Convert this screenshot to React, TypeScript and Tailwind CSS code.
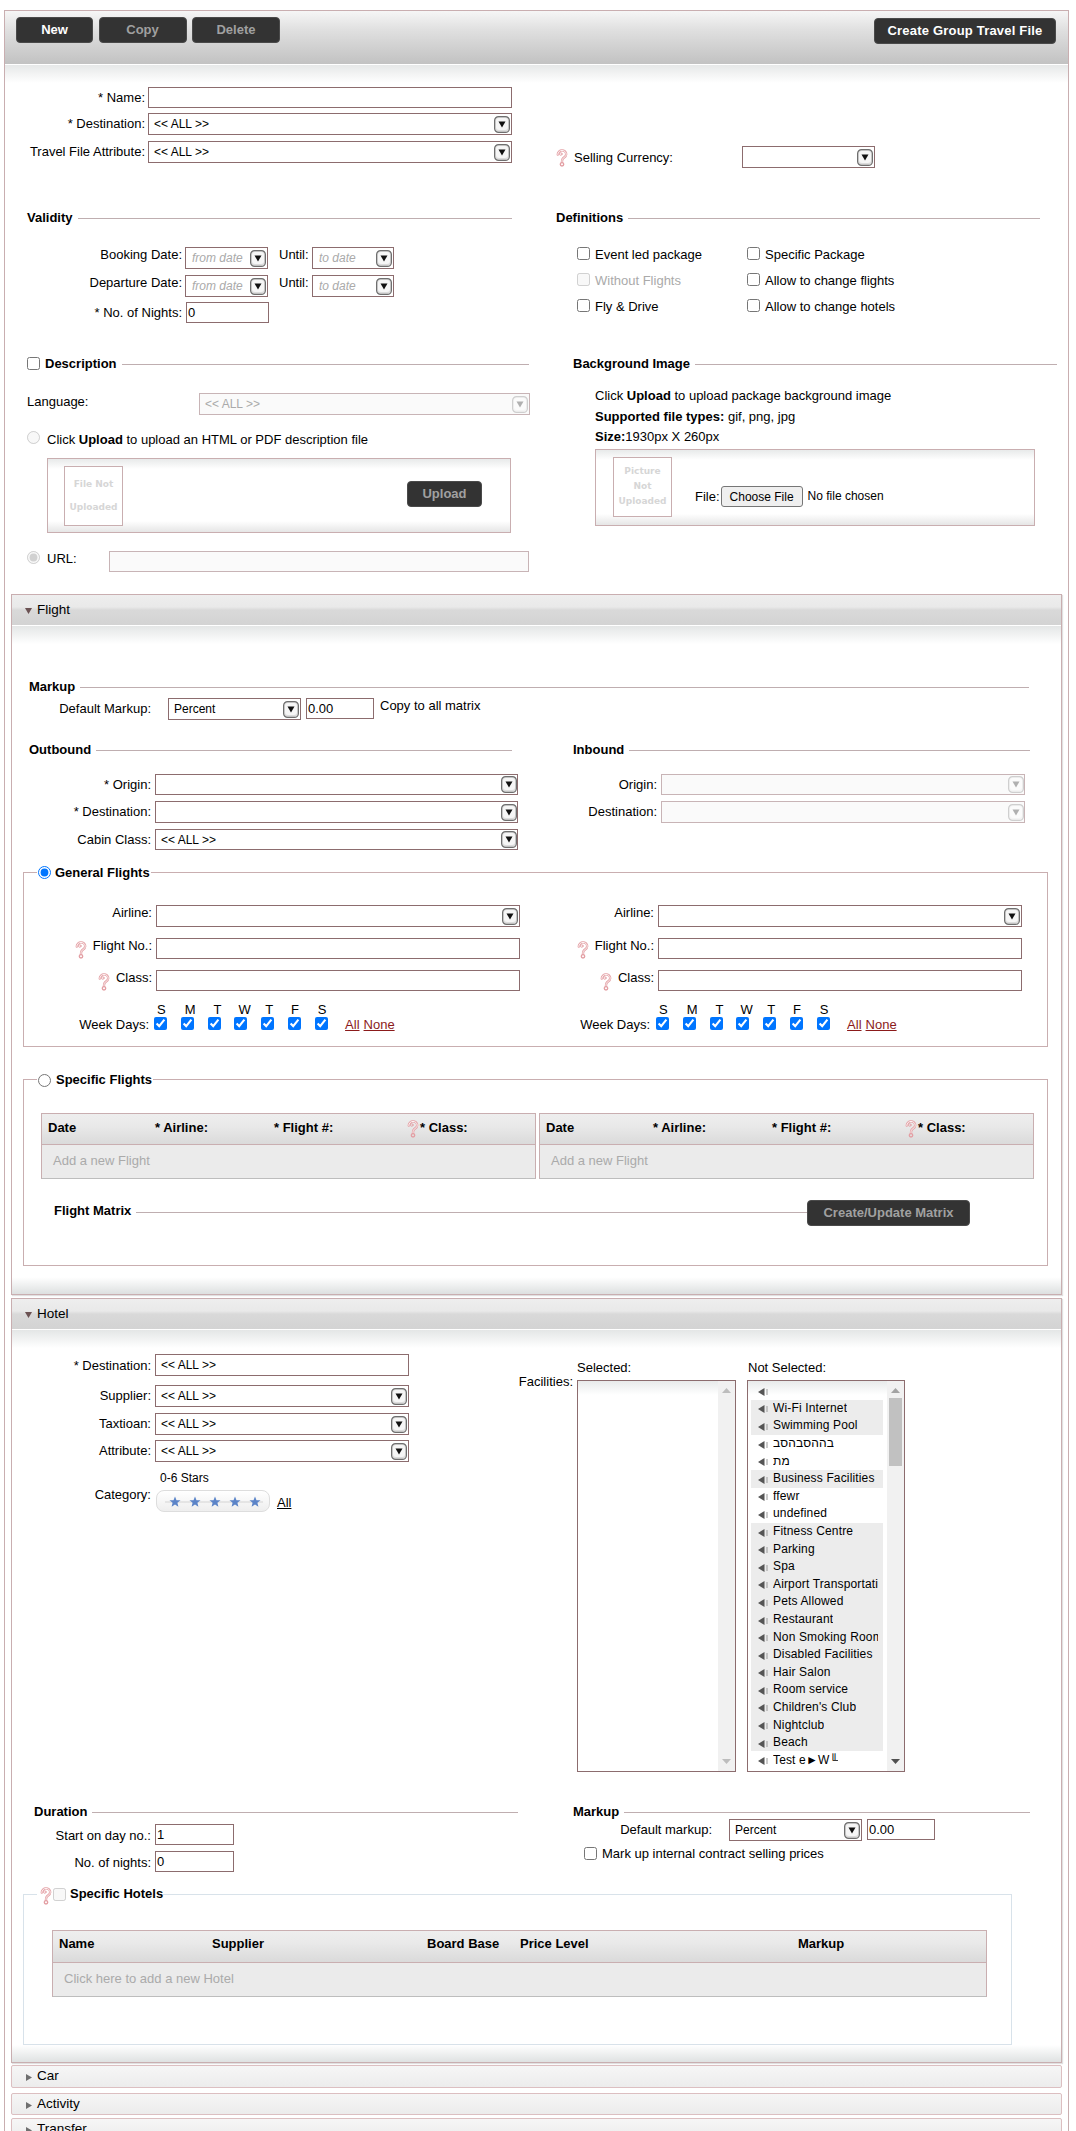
import React from "react";

type P = { className?: string; children?: React.ReactNode };

const Arrow = ({ off }: { off?: boolean }) => (
  <svg width="16" height="17" viewBox="0 0 16 17" className="shrink-0">
    <rect x="0.6" y="0.6" width="14.8" height="15.8" rx="4" fill={off ? "#f4f4f4" : "#dcdcdc"} stroke={off ? "#cfcfcf" : "#6f6f6f"} strokeWidth="1.2" />
    <rect x="2" y="2" width="12" height="12" rx="3" fill={off ? "#fbfbfb" : "#f6f6f6"} />
    <polygon points="4.5,5.5 11.5,5.5 8,11.5" fill={off ? "#b0b0b0" : "#111111"} />
  </svg>
);

const Sel = ({ className = "", text = "", off, noArrow, tight }: { className?: string; text?: string; off?: boolean; noArrow?: boolean; tight?: boolean }) => (
  <div className={`flex shrink-0 items-center justify-between border pl-[5px] text-[12px] ${tight ? "" : "pr-[1px]"} ${off ? "border-[#c8b4b6] bg-[#fafafa] text-[#aaaaaa]" : "border-[#8c6c6e] bg-white"} ${className}`}>
    <span>{text}</span>
    {!noArrow && <Arrow off={off} />}
  </div>
);

const DateSel = ({ className = "", text }: { className?: string; text: string }) => (
  <div className={`flex h-[22px] shrink-0 items-center justify-between border border-[#8c6c6e] pl-[6px] pr-[1px] text-[12px] italic text-[#aaaaaa] ${className}`}>
    <span>{text}</span>
    <Arrow />
  </div>
);

const Inp = ({ className = "", value = "", off }: { className?: string; value?: string; off?: boolean }) => (
  <input readOnly disabled={off} defaultValue={value} className={`block shrink-0 border pl-[1px] ${off ? "border-[#c8b4b6] bg-[#fafafa]" : "border-[#8c6c6e] bg-white"} ${className}`} />
);

const Lab = ({ className = "", children }: P) => <div className={`shrink-0 text-right leading-[15px] ${className}`}>{children}</div>;

const Title = ({ className = "", children }: P) => (
  <div className={`flex items-start font-bold leading-[15px] ${className}`}>
    {children}
    <div className="ml-[5px] mt-[8px] h-px flex-1 bg-[#bfaeb0]" />
  </div>
);

const Help = ({ className = "" }: { className?: string }) => (
  <svg width="12" height="18" viewBox="0 0 12 18" className={`shrink-0 ${className}`}>
    <g fill="none" strokeLinecap="round">
      <path d="M1.800 5.500C1.800 3 3.800 1.400 6 1.400s4.200 1.600 4.200 3.900c0 2-1.700 2.900-3 3.900C6.400 9.900 6 10.800 6 12.500" stroke="#e39fa4" strokeWidth="2.400" />
      <path d="M1.800 5.500C1.800 3 3.800 1.400 6 1.400s4.200 1.600 4.200 3.900c0 2-1.700 2.900-3 3.900C6.400 9.900 6 10.800 6 12.500" stroke="#fdf3f3" strokeWidth="1" />
      <circle cx="6" cy="15.300" r="1.700" stroke="#e39fa4" strokeWidth="1.400" />
      <circle cx="4.800" cy="5" r="1.300" stroke="#e39fa4" strokeWidth="0.900" />
    </g>
  </svg>
);

const Check = ({ on, off, className = "" }: { on?: boolean; off?: boolean; className?: string }) => (
  <input type="checkbox" readOnly checked={!!on} disabled={off} className={`m-0 block h-[13px] w-[13px] shrink-0 ${className}`} />
);
const Radio = ({ on, off, className = "" }: { on?: boolean; off?: boolean; className?: string }) => (
  <input type="radio" readOnly checked={!!on} disabled={off} className={`m-0 block h-[13px] w-[13px] shrink-0 ${className}`} />
);

const Btn = ({ className = "", children, dim }: P & { dim?: boolean }) => (
  <div className={`flex h-[26px] shrink-0 items-center justify-center rounded-[4px] border border-[#4a4a4a] bg-[#333333] text-[13px] font-bold ${dim ? "text-[#a0a0a0]" : "text-white"} ${className}`}>{children}</div>
);

const CbLabel = ({ children, off }: { children: React.ReactNode; off?: boolean }) => (
  <div className={`flex h-[26px] items-start gap-[5px] leading-[15px] ${off ? "text-[#aaaaaa]" : ""}`}>
    <Check off={off} />
    <span>{children}</span>
  </div>
);

const PanelHead = ({ children }: P) => (
  <>
    <div className="flex h-[30px] items-center bg-[linear-gradient(#eeeeee,#e9e9e9_40%,#d9d9d9_50%,#d3d3d3)] pl-[13px] pt-[1px] text-[13.500px]">
      <svg width="7" height="6" viewBox="0 0 7 6" className="mr-[5px]"><polygon points="0,0 7,0 3.500,6" fill="#6b5253" /></svg>
      <span>{children}</span>
    </div>
    <div className="h-px bg-white" />
  </>
);

const Closed = ({ className = "", children }: P) => (
  <div className={`ml-[6px] flex w-[1051px] shrink-0 items-center rounded-[2px] border border-[#dcbfc1] bg-[linear-gradient(#f6f6f6,#ececec)] pl-[14px] text-[13.500px] ${className}`}>
    <svg width="6" height="7" viewBox="0 0 6 7" className="mr-[5px] mt-[2px]"><polygon points="0,0 6,3.500 0,7" fill="#6f6f6f" /></svg>
    <span>{children}</span>
  </div>
);

const Cols = ["pl-[3px]", "pl-[4px]", "pl-[6px]", "pl-[4px]", "pl-[4px]", "pl-[3px]", "pl-[3px]"];
const FlightCol = ({ labA, labW, gap }: { labA: string; labW: string; gap: string }) => (
  <div>
    <div className="flex">
      <Lab className={labA}>Airline:</Lab>
      <Sel className="ml-[4px] h-[22px] w-[364px]" />
    </div>
    <div className="mt-[11px] flex">
      <Lab className={`flex justify-end ${labA}`}><Help className="mr-[6px] mt-[3px]" />Flight No.:</Lab>
      <Inp className="ml-[4px] h-[21px] w-[364px]" />
    </div>
    <div className="mt-[11px] flex">
      <Lab className={`flex justify-end ${labA}`}><Help className="mr-[6px] mt-[3px]" />Class:</Lab>
      <Inp className="ml-[4px] h-[21px] w-[364px]" />
    </div>
    <div className="mt-[11px] flex items-start">
      <Lab className={`mt-[15px] ${labW}`}>Week Days:</Lab>
      <div className={`flex ${gap}`}>
        {["S", "M", "T", "W", "T", "F", "S"].map((d, i) => (
          <div key={i} className="w-[26.800px]">
            <div className={`h-[15px] leading-[15px] ${Cols[i]}`}>{d}</div>
            <Check on />
          </div>
        ))}
      </div>
      <div className="ml-[3.500px] mt-[15px] leading-[15px] text-[#8b1a1a] underline">All</div>
      <div className="ml-[4px] mt-[15px] leading-[15px] text-[#8b1a1a] underline">None</div>
    </div>
  </div>
);

const FlightTable = ({ className, w }: { className: string; w: string[] }) => (
  <div className={`shrink-0 border border-[#c9aeb0] border-b-[#bdbdbd] ${className}`}>
    <div className="flex h-[31px] items-start border-b border-[#c9aeb0] bg-[linear-gradient(#eeeeee,#e9e9e9_40%,#dadada)] pt-[6px] font-bold leading-[15px]">
      <div className={w[0]}>Date</div>
      <div className={w[1]}>* Airline:</div>
      <div className={w[2]}>* Flight #:</div>
      <Help />
      <div className="ml-[1px]">* Class:</div>
    </div>
    <div className={`flex h-[33px] items-center bg-[#ebebeb] pb-[2px] text-[#aaaaaa] ${w[3]}`}>Add a new Flight</div>
  </div>
);

const ImgBox = ({ className = "", children }: P) => (
  <div className={`flex h-[60px] w-[59px] shrink-0 flex-col items-center justify-center border border-[#c9aeb0] bg-white text-center text-[9px] font-bold text-[#d6d6d6] [font-family:'DejaVu_Sans',sans-serif] ${className}`}>{children}</div>
);

const facilities: [string, boolean][] = [
  ["", false],
  ["Wi-Fi Internet", true],
  ["Swimming Pool", true],
  ["בההסבהסב", false],
  ["מת", false],
  ["Business Facilities", true],
  ["ffewr", false],
  ["undefined", false],
  ["Fitness Centre", true],
  ["Parking", true],
  ["Spa", true],
  ["Airport Transportation", true],
  ["Pets Allowed", true],
  ["Restaurant", true],
  ["Non Smoking Rooms", true],
  ["Disabled Facilities", true],
  ["Hair Salon", true],
  ["Room service", true],
  ["Children's Club", true],
  ["Nightclub", true],
  ["Beach", true],
  ["Test e►W╙", false],
];

const TinyUp = ({ fill }: { fill: string }) => <svg width="9" height="5" viewBox="0 0 9 5" className="block"><polygon points="4.500,0 9,5 0,5" fill={fill} /></svg>;
const TinyDown = ({ fill }: { fill: string }) => <svg width="9" height="5" viewBox="0 0 9 5" className="block"><polygon points="0,0 9,0 4.500,5" fill={fill} /></svg>;

const Bars = ({ thumb }: { thumb?: boolean }) => (
  <div className="flex w-[17px] shrink-0 flex-col items-center bg-[#f1f1f1] pt-[7px] pb-[7px]">
    <TinyUp fill={thumb ? "#a3a3a3" : "#bdbdbd"} />
    {thumb && <div className="mt-[5px] h-[68px] w-[13px] bg-[#c1c1c1]" />}
    <div className="mt-auto"><TinyDown fill={thumb ? "#505050" : "#bdbdbd"} /></div>
  </div>
);

const Stars = () => (
  <svg width="114" height="22" viewBox="0 0 114 22" className="block">
    <line x1="8" y1="11" x2="106" y2="11" stroke="#d4d4d4" strokeWidth="1" />
    {[18, 38, 58, 78, 98].map((x) => (
      <polygon key={x} transform={`translate(${x} 11)`} points="0,-5.500 1.500,-1.800 5.500,-1.700 2.400,0.800 3.400,4.800 0,2.600 -3.400,4.800 -2.400,0.800 -5.500,-1.700 -1.500,-1.800" fill="#5b84c8" />
    ))}
  </svg>
);

export default function App() {
  return (
    <div className="h-[2131px] overflow-hidden bg-white pt-[10px] text-[13px] leading-normal text-black [font-family:'Liberation_Sans',Arial,sans-serif]">
      <div className="ml-[4px] w-[1065px] border border-[#c9aeb0] pb-[40px]">
        {/* toolbar */}
        <div className="flex h-[53px] justify-between bg-[linear-gradient(#f6f6f6,#e0e0e0_35%,#c2c2c2)] pl-[11px] pr-[12px] pt-[6px]">
          <div className="flex gap-[5.500px]">
            <Btn className="w-[77px]">New</Btn>
            <Btn dim className="w-[88px]">Copy</Btn>
            <Btn dim className="w-[88px]">Delete</Btn>
          </div>
          <Btn className="mt-[1px] w-[182px] tracking-[0.2px]">Create Group Travel File</Btn>
        </div>
        <div className="h-px bg-white" />

        {/* block A */}
        <div className="flex h-[275px] bg-[linear-gradient(#e6e8e8,#ffffff_18px)]">
          <div className="w-[540px] shrink-0 pt-[22px]">
            <div className="flex">
              <Lab className="w-[140px] pt-[3px]">* Name:</Lab>
              <Inp className="ml-[3px] h-[21px] w-[364px]" />
            </div>
            <div className="mt-[5px] flex">
              <Lab className="w-[140px] pt-[3px]">* Destination:</Lab>
              <Sel className="ml-[3px] h-[22px] w-[364px]" text="<< ALL >>" />
            </div>
            <div className="mt-[6px] flex">
              <Lab className="w-[140px] pt-[3px]">Travel File Attribute:</Lab>
              <Sel className="ml-[3px] h-[22px] w-[364px]" text="<< ALL >>" />
            </div>
            <Title className="ml-[22px] mt-[47px] w-[485px]">Validity</Title>
            <div className="mt-[22px] flex">
              <Lab className="w-[177px]">Booking Date:</Lab>
              <DateSel className="ml-[3px] w-[83px]" text="from date" />
              <div className="ml-[11px] w-[30px] leading-[15px]">Until:</div>
              <DateSel className="ml-[3px] w-[82px]" text="to date" />
            </div>
            <div className="mt-[6px] flex">
              <Lab className="w-[177px]">Departure Date:</Lab>
              <DateSel className="ml-[3px] w-[83px]" text="from date" />
              <div className="ml-[11px] w-[30px] leading-[15px]">Until:</div>
              <DateSel className="ml-[3px] w-[82px]" text="to date" />
            </div>
            <div className="mt-[5px] flex">
              <Lab className="w-[177px] pt-[3px]">* No. of Nights:</Lab>
              <Inp className="ml-[4px] h-[21px] w-[83px]" value="0" />
            </div>
          </div>
          <div className="flex-1 pt-[81px]">
            <div className="ml-[11px] flex">
              <Help className="mt-[3px]" />
              <div className="ml-[6px] mt-[4px] w-[168px] leading-[15px]">Selling Currency:</div>
              <Sel className="h-[22px] w-[133px]" />
            </div>
            <Title className="ml-[11px] mt-[42px] w-[484px]">Definitions</Title>
            <div className="ml-[32px] mt-[22px] grid grid-cols-[170px_1fr]">
              <CbLabel>Event led package</CbLabel>
              <CbLabel>Specific Package</CbLabel>
              <CbLabel off>Without Flights</CbLabel>
              <CbLabel>Allow to change flights</CbLabel>
              <CbLabel>Fly &amp; Drive</CbLabel>
              <CbLabel>Allow to change hotels</CbLabel>
            </div>
          </div>
        </div>

        {/* block B */}
        <div className="flex h-[254px]">
          <div className="w-[540px] shrink-0 pl-[22px] pt-[16px]">
            <div className="flex w-[502px] items-start">
              <Check className="mt-[1px]" />
              <Title className="ml-[5px] flex-1">Description</Title>
            </div>
            <div className="mt-[22px] flex">
              <div className="w-[172px] pt-[1px] leading-[15px]">Language:</div>
              <Sel off className="h-[22px] w-[331px]" text="<< ALL >>" />
            </div>
            <div className="mt-[16px] flex leading-[15px]">
              <Radio off />
              <div className="ml-[7px] mt-[1px]">Click <b>Upload</b> to upload an HTML or PDF description file</div>
            </div>
            <div className="ml-[20px] mt-[11px] flex h-[75px] w-[464px] border border-[#c9aeb0] bg-[linear-gradient(#e8eaea,#ffffff_10px,#ffffff_85%,#e6e6e6)] pl-[16px] pt-[7px]">
              <ImgBox className="gap-[9px]"><span>File Not</span><span>Uploaded</span></ImgBox>
              <Btn dim className="ml-[284px] mt-[15px] w-[75px]">Upload</Btn>
            </div>
            <div className="mt-[18px] flex">
              <Radio on off />
              <div className="ml-[7px] w-[62px] leading-[15px]">URL:</div>
              <Inp off className="h-[21px] w-[420px]" />
            </div>
          </div>
          <div className="flex-1 pl-[28px] pt-[16px]">
            <Title className="w-[484px]">Background Image</Title>
            <div className="ml-[22px] mt-[17px] leading-[15px]">Click <b>Upload</b> to upload package background image</div>
            <div className="ml-[22px] mt-[6px] leading-[15px]"><b>Supported file types:</b> gif, png, jpg</div>
            <div className="ml-[22px] mt-[5px] leading-[15px]"><b>Size:</b>1930px X 260px</div>
            <div className="ml-[22px] mt-[5px] flex h-[77px] w-[440px] border border-[#c9aeb0] bg-[linear-gradient(#e8eaea,#ffffff_10px,#ffffff_85%,#e6e6e6)] pl-[17px] pt-[7px]">
              <ImgBox className="gap-[1.500px]"><span>Picture</span><span>Not</span><span>Uploaded</span></ImgBox>
              <div className="ml-[23px] mt-[32px] leading-[15px]">File:</div>
              <div className="ml-[1px] mt-[29px] flex h-[21px] w-[82px] items-center justify-center rounded-[3px] border border-[#767676] bg-[#efefef] text-[12px]">Choose File</div>
              <div className="ml-[5px] mt-[32px] text-[12px] leading-[15px]">No file chosen</div>
            </div>
          </div>
        </div>

        {/* Flight panel */}
        <div className="ml-[6px] w-[1051px] border border-[#c9aeb0] shadow-[1px_1px_1px_rgba(0,0,0,0.12)]">
          <PanelHead>Flight</PanelHead>
          <div className="bg-[linear-gradient(#e4e6e6,#ffffff_18px)] pt-[53px]">
            <Title className="ml-[17px] w-[1000px]">Markup</Title>
            <div className="mt-[4px] flex">
              <Lab className="w-[139px] pt-[3px]">Default Markup:</Lab>
              <Sel className="ml-[17px] h-[22px] w-[133px]" text="Percent" />
              <Inp className="ml-[5px] h-[21px] w-[68px]" value="0.00" />
              <div className="ml-[6px] leading-[15px]">Copy to all matrix</div>
            </div>
            <div className="mt-[22px] flex">
              <div className="w-[528px] shrink-0">
                <Title className="ml-[17px] w-[483px]">Outbound</Title>
                <div className="mt-[17px] flex">
                  <Lab className="w-[139px] pt-[3px]">* Origin:</Lab>
                  <Sel tight className="ml-[4px] h-[21px] w-[363px]" />
                </div>
                <div className="mt-[6px] flex">
                  <Lab className="w-[139px] pt-[3px]">* Destination:</Lab>
                  <Sel tight className="ml-[4px] h-[22px] w-[363px]" />
                </div>
                <div className="mt-[6px] flex">
                  <Lab className="w-[139px] pt-[3px]">Cabin Class:</Lab>
                  <Sel tight className="ml-[4px] h-[21px] w-[363px]" text="<< ALL >>" />
                </div>
              </div>
              <div className="flex-1">
                <Title className="ml-[33px] w-[457px]">Inbound</Title>
                <div className="mt-[17px] flex">
                  <Lab className="w-[117px] pt-[3px]">Origin:</Lab>
                  <Sel off tight className="ml-[4px] h-[21px] w-[364px]" />
                </div>
                <div className="mt-[6px] flex">
                  <Lab className="w-[117px] pt-[3px]">Destination:</Lab>
                  <Sel off tight className="ml-[4px] h-[22px] w-[364px]" />
                </div>
              </div>
            </div>

            <fieldset className="ml-[11px] mt-[15px] w-[1025px] border border-[#c9aeb0] pb-[14px]">
              <legend className="ml-[13px] bg-white pl-[1px]">
                <div className="flex h-[15px] items-start font-bold leading-[15px]">
                  <Radio on className="mt-[1px]" />
                  <span className="ml-[4px] pr-[1px]">General Flights</span>
                </div>
              </legend>
              <div className="mt-[25px] grid grid-cols-[510px_1fr]">
                <FlightCol labA="w-[128px]" labW="w-[125px]" gap="ml-[5px]" />
                <FlightCol labA="w-[120px]" labW="w-[116px]" gap="ml-[6px]" />
              </div>
            </fieldset>

            <fieldset className="ml-[11px] mt-[25px] w-[1025px] border border-[#c9aeb0] pb-[39px]">
              <legend className="ml-[13px] bg-white pl-[1px]">
                <div className="flex h-[15px] items-start font-bold leading-[15px]">
                  <Radio className="mt-[2px]" />
                  <span className="ml-[5px] pr-[1px]">Specific Flights</span>
                </div>
              </legend>
              <div className="ml-[17px] mt-[26px] flex">
                <FlightTable className="w-[495px]" w={["w-[113px] pl-[6px]", "w-[119px]", "w-[133px]", "pl-[11px]"]} />
                <FlightTable className="ml-[3px] w-[495px]" w={["w-[113px] pl-[6px]", "w-[119px]", "w-[133px]", "pl-[11px]"]} />
              </div>
              <div className="ml-[30px] mt-[21px] flex w-[916px] items-start">
                <div className="mt-[3px] font-bold leading-[15px]">Flight Matrix</div>
                <div className="ml-[5px] mt-[12px] h-px flex-1 bg-[#bfaeb0]" />
                <Btn dim className="w-[163px]">Create/Update Matrix</Btn>
              </div>
            </fieldset>
            <div className="h-[28px] bg-[linear-gradient(#ffffff_40%,#dde0e0)]" />
          </div>
        </div>

        {/* Hotel panel */}
        <div className="ml-[6px] mt-[3px] w-[1051px] border border-[#c9aeb0] shadow-[1px_1px_1px_rgba(0,0,0,0.12)]">
          <PanelHead>Hotel</PanelHead>
          <div className="bg-[linear-gradient(#e4e6e6,#ffffff_18px)]">
            <div className="flex">
              <div className="w-[500px] shrink-0 pt-[24px]">
                <div className="flex">
                  <Lab className="w-[139px] pt-[4px]">* Destination:</Lab>
                  <Sel noArrow className="ml-[4px] h-[22px] w-[254px]" text="<< ALL >>" />
                </div>
                <div className="mt-[9px] flex">
                  <Lab className="w-[139px] pt-[3px]">Supplier:</Lab>
                  <Sel className="ml-[4px] h-[22px] w-[254px]" text="<< ALL >>" />
                </div>
                <div className="mt-[6px] flex">
                  <Lab className="w-[139px] pt-[3px]">Taxtioan:</Lab>
                  <Sel className="ml-[4px] h-[22px] w-[254px]" text="<< ALL >>" />
                </div>
                <div className="mt-[5px] flex">
                  <Lab className="w-[139px] pt-[3px]">Attribute:</Lab>
                  <Sel className="ml-[4px] h-[22px] w-[254px]" text="<< ALL >>" />
                </div>
                <div className="ml-[148px] mt-[9px] text-[12px] leading-[15px]">0-6 Stars</div>
                <div className="mt-[4px] flex items-start">
                  <Lab className="-mt-[3px] w-[139px]">Category:</Lab>
                  <div className="ml-[5px] h-[22px] w-[114px] rounded-[8px] border border-[#dddddd] bg-[linear-gradient(#ffffff,#eeeeee)]"><Stars /></div>
                  <div className="ml-[7px] mt-[5px] leading-[15px] underline">All</div>
                </div>
              </div>
              <Lab className="mt-[44px] w-[61px]">Facilities:</Lab>
              <div className="ml-[4px] mt-[30px] w-[159px] shrink-0">
                <div className="leading-[15px]">Selected:</div>
                <div className="mt-[5px] flex h-[392px] border border-[#8c6c6e]">
                  <div className="flex-1 bg-[linear-gradient(#e8eaea,#ffffff_14px)]" />
                  <Bars />
                </div>
              </div>
              <div className="ml-[11px] mt-[30px] w-[158px] shrink-0">
                <div className="pl-[1px] leading-[15px]">Not Selected:</div>
                <div className="mt-[5px] flex h-[392px] border border-[#8c6c6e]">
                  <div className="min-w-0 flex-1 bg-[linear-gradient(#e8eaea,#ffffff_14px)] pl-[3px] pr-[4px] pt-[1px] text-[12px]">
                    {facilities.map(([name, shaded], i) => (
                      <div key={i} className={`flex h-[17.600px] items-center pl-[7px] pr-[5px] ${shaded ? "bg-[#ececec]" : ""}`}>
                        <svg width="10" height="8" viewBox="0 0 10 8" className="mt-[2px] shrink-0"><polygon points="0,4 6.500,0 6.500,8" fill="#555555" /><rect x="8.500" y="1" width="1" height="6" fill="#999999" /></svg>
                        <span className="ml-[5px] min-w-0 overflow-hidden whitespace-nowrap leading-[15px] tracking-[0.15px]">{name}</span>
                      </div>
                    ))}
                  </div>
                  <Bars thumb />
                </div>
              </div>
            </div>

            <div className="mt-[32px] flex">
              <div className="w-[528px] shrink-0">
                <Title className="ml-[22px] w-[484px]">Duration</Title>
                <div className="mt-[5px] flex">
                  <Lab className="w-[139px] pt-[4px]">Start on day no.:</Lab>
                  <Inp className="ml-[4px] h-[21px] w-[79px]" value="1" />
                </div>
                <div className="mt-[6px] flex">
                  <Lab className="w-[139px] pt-[4px]">No. of nights:</Lab>
                  <Inp className="ml-[4px] h-[21px] w-[79px]" value="0" />
                </div>
              </div>
              <div className="flex-1">
                <Title className="ml-[33px] w-[457px]">Markup</Title>
                <div className="flex">
                  <Lab className="w-[172px] pt-[3px]">Default markup:</Lab>
                  <Sel className="ml-[17px] h-[22px] w-[133px]" text="Percent" />
                  <Inp className="ml-[5px] h-[21px] w-[68px]" value="0.00" />
                </div>
                <div className="ml-[44px] mt-[6px] flex items-start gap-[5px] leading-[15px]">
                  <Check />
                  <span className="-mt-[1px]">Mark up internal contract selling prices</span>
                </div>
              </div>
            </div>

            <fieldset className="ml-[11px] mt-[14px] w-[989px] border border-[#d8e2ea]">
              <legend className="ml-[13px] bg-white pl-[3px]">
                <div className="flex h-[16px] items-start font-bold leading-[15px]">
                  <Help className="mt-[1px]" />
                  <Check off className="ml-[1px] mt-[2px]" />
                  <span className="ml-[4px]">Specific Hotels</span>
                </div>
              </legend>
              <div className="ml-[28px] mt-[28px] mb-[47px] w-[935px] border border-[#c9aeb0] border-b-[#bdbdbd]">
                <div className="flex h-[32px] items-start border-b border-[#c9aeb0] bg-[linear-gradient(#eeeeee,#e9e9e9_40%,#dadada)] pl-[6px] pt-[5px] font-bold leading-[15px]">
                  <div className="w-[153px]">Name</div>
                  <div className="w-[215px]">Supplier</div>
                  <div className="w-[93px]">Board Base</div>
                  <div className="w-[278px]">Price Level</div>
                  <div>Markup</div>
                </div>
                <div className="flex h-[33px] items-center bg-[#ebebeb] pb-[2px] pl-[11px] text-[#aaaaaa]">Click here to add a new Hotel</div>
              </div>
            </fieldset>
            <div className="h-[17px] bg-[linear-gradient(#ffffff,#dfe2e2)]" />
          </div>
        </div>

        <Closed className="mt-[2px] h-[23px]">Car</Closed>
        <Closed className="mt-[5px] h-[22px]">Activity</Closed>
        <Closed className="mt-[3px] h-[22px]">Transfer</Closed>
      </div>
    </div>
  );
}
